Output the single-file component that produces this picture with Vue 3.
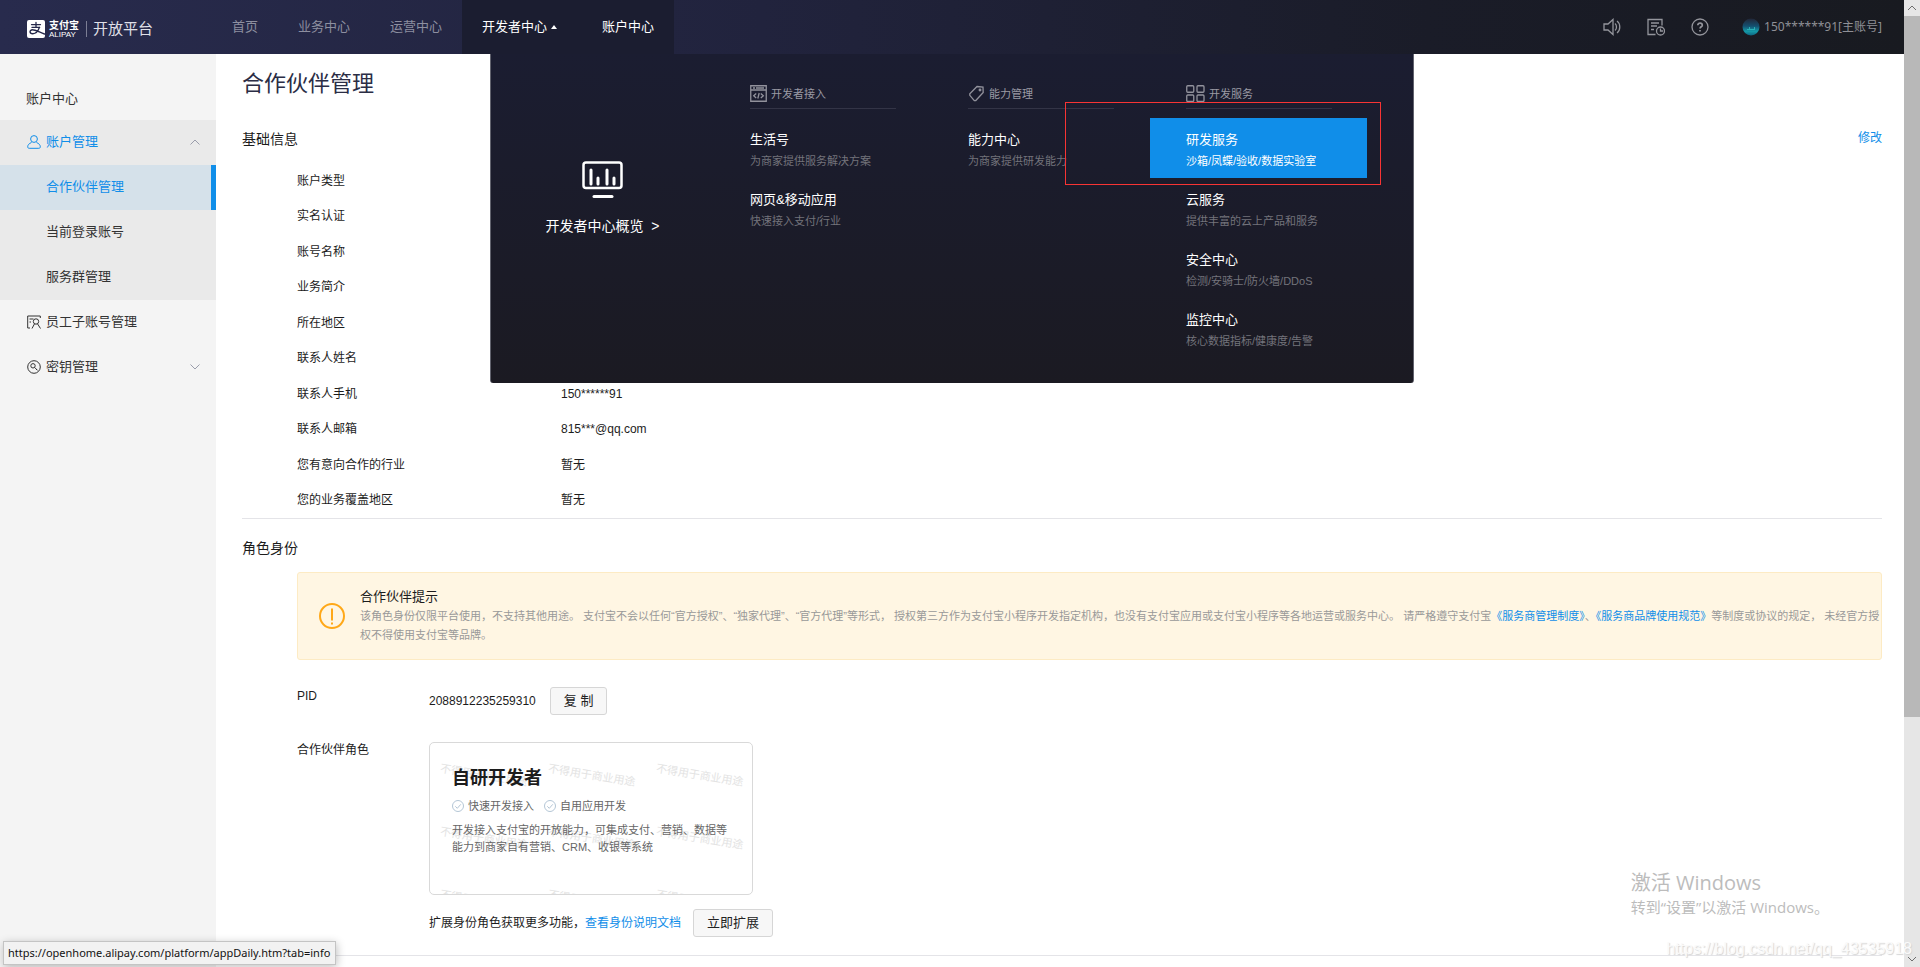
<script setup>
const mainNav = ['首页', '业务中心', '运营中心']

const sideItems = ['当前登录账号', '服务群管理']

const menuColumns = [
  {
    icon: 'code',
    title: '开发者接入',
    items: [
      { name: '生活号', desc: '为商家提供服务解决方案' },
      { name: '网页&移动应用', desc: '快速接入支付/行业' },
    ],
  },
  {
    icon: 'tag',
    title: '能力管理',
    items: [{ name: '能力中心', desc: '为商家提供研发能力' }],
  },
  {
    icon: 'grid',
    title: '开发服务',
    items: [
      { name: '研发服务', desc: '沙箱/凤蝶/验收/数据实验室', active: true },
      { name: '云服务', desc: '提供丰富的云上产品和服务' },
      { name: '安全中心', desc: '检测/安骑士/防火墙/DDoS' },
      { name: '监控中心', desc: '核心数据指标/健康度/告警' },
    ],
  },
]

const info = [
  ['账户类型', ''],
  ['实名认证', ''],
  ['账号名称', ''],
  ['业务简介', ''],
  ['所在地区', ''],
  ['联系人姓名', ''],
  ['联系人手机', '150******91'],
  ['联系人邮箱', '815***@qq.com'],
  ['您有意向合作的行业', '暂无'],
  ['您的业务覆盖地区', '暂无'],
]
</script>

<template>
  <div class="window">
    <div class="page">
      <header class="topbar">
        <a class="logo" href="#">
          <svg class="logo-mark" viewBox="0 0 18 18" aria-hidden="true">
            <rect width="18" height="18" rx="2" fill="#fff" />
            <g fill="none" stroke="#25284a" stroke-linecap="round">
              <path d="M4.5 4.6h9M9 2.4v4.8M5 7.4h7.6" stroke-width="1.3" />
              <path d="M12.4 7.4c-1.2 3.6-3.8 6.3-6.6 6.3-3.6 0-3.6-3.9-.3-3.9 2.8 0 6.5 2.200 12 4.200" stroke-width="1.4" />
            </g>
          </svg>
          <span class="logo-name"><b>支付宝</b><i>ALIPAY</i></span>
          <span class="logo-sub">开放平台</span>
        </a>
        <nav class="nav">
          <a v-for="n in mainNav" :key="n" href="#">{{ n }}</a>
          <a class="on dev" href="#">开发者中心<svg viewBox="0 0 6 4" width="6" height="4"><path d="M0 4 3 0l3 4z" fill="#fff" /></svg></a>
          <a class="on" href="#">账户中心</a>
        </nav>
        <div class="tools">
          <button type="button" aria-label="公告">
            <svg viewBox="0 0 18 18"><path d="M1 6h4l5-4.500v15L5 12H1zM12 5.500c2 1.500 2 5.500 0 7M14 3c3.700 2.500 3.700 9.500 0 12" /></svg>
          </button>
          <button type="button" aria-label="工单">
            <svg viewBox="0 0 18 18"><path d="M8.500 16.500H1V1.500h14v6M4 5h8M4 8h6M4 11.500h3" /><circle cx="13.500" cy="13" r="4" /><path d="M13.500 10.500V13H16" /></svg>
          </button>
          <button type="button" aria-label="帮助">
            <svg viewBox="0 0 18 18"><circle cx="9" cy="9" r="8" /><path d="M6.800 7.200c0-2.800 4.500-2.800 4.500 0 0 1.600-2.200 1.500-2.200 3.200M9 12v1.500" stroke-width="1.700" /></svg>
          </button>
          <a class="user" href="#">
            <svg viewBox="0 0 18 18" aria-hidden="true">
              <defs>
                <linearGradient id="sea" x1="0" y1="0" x2="0" y2="1">
                  <stop offset="0" stop-color="#222536" /><stop offset=".45" stop-color="#145070" /><stop offset=".75" stop-color="#149aa8" /><stop offset="1" stop-color="#0f6480" />
                </linearGradient>
              </defs>
              <circle cx="9" cy="9" r="8.500" fill="url(#sea)" />
              <path d="M5 11h2V9h1v2h4V9h1v3h-8z" fill="#33c6c6" opacity=".7" />
            </svg>
            150******91[主账号]
          </a>
        </div>

        <section class="mega">
          <a class="overview" href="#">
            <svg viewBox="0 0 41 38" width="41" height="38" fill="none" stroke="#fff" stroke-linecap="round">
              <rect x="1.500" y="1.500" width="38" height="25.500" rx="2.500" stroke-width="2.500" />
              <path d="M9 9v14M16 17v6M25 9v14M32 17v6" stroke-width="3" />
              <path d="M12 35.500h18" stroke-width="3" />
            </svg>
            <span>开发者中心概览&nbsp; &gt;</span>
          </a>
          <div v-for="c in menuColumns" :key="c.title" class="mega-col">
            <h3>
              <svg v-if="c.icon === 'code'" viewBox="0 0 17 17" width="17" height="17"><path d="M.75.75h15.500v15.500H.75zM1 5h15M3 3h2M6 3h8M6.200 8.500l-2.500 2.300 2.500 2.300M10.800 8.500l2.500 2.300-2.500 2.300M9.200 8l-1.400 5.500" /></svg>
              <svg v-else-if="c.icon === 'tag'" viewBox="0 0 17 17" width="17" height="17"><path d="M9 1.500 15 2l.2 5.500-7.400 8-1.500.1-4.500-5.300v-1.500z" /><circle cx="12" cy="5" r=".8" /></svg>
              <svg v-else viewBox="0 0 19 17" width="19" height="17"><rect x=".75" y=".75" width="7" height="6.500" rx="1" /><rect x="11" y=".75" width="7" height="6.500" rx="1" /><rect x=".75" y="10" width="7" height="6.500" rx="1" /><rect x="11" y="10" width="7" height="6.500" rx="1" /></svg>
              {{ c.title }}
            </h3>
            <a v-for="i in c.items" :key="i.name" href="#" :class="{ active: i.active }">
              <strong>{{ i.name }}</strong>
              <span>{{ i.desc }}</span>
            </a>
          </div>
          <div class="marker"></div>
        </section>
      </header>

      <div class="body">
        <aside class="side">
          <h2>账户中心</h2>
          <div class="group">
            <a class="blue" href="#">
              <svg class="ico" viewBox="0 0 14 14"><circle cx="7" cy="4" r="3.400" /><path d="M4.500 7.500C2 8.500.7 10 .7 11.800c0 1 .6 1.500 1.500 1.500h9.600c.9 0 1.500-.5 1.500-1.500 0-1.800-1.300-3.300-3.800-4.300" /></svg>
              账户管理
              <svg class="arrow" viewBox="0 0 10 6"><path d="M.5 5.500 5 1l4.500 4.500" /></svg>
            </a>
            <a class="sub current" href="#">合作伙伴管理</a>
            <a v-for="s in sideItems" :key="s" class="sub" href="#">{{ s }}</a>
          </div>
          <a href="#">
            <svg class="ico" viewBox="0 0 14 14"><path d="M3 13H.7V1h12.600v2M2.500 4h4M2.500 7H4" /><circle cx="9" cy="6.500" r="2.700" /><path d="M7.500 8.800 5 13.500M10.500 8.800l3 4.700" /></svg>
            员工子账号管理
          </a>
          <a href="#">
            <svg class="ico" viewBox="0 0 14 14"><circle cx="7" cy="7" r="6.300" /><circle cx="6" cy="5.800" r="2.200" /><path d="m7.600 7.400 3 3M9 10l1-1" /></svg>
            密钥管理
            <svg class="arrow" viewBox="0 0 10 6"><path d="M.5.500 5 5 9.500.500" /></svg>
          </a>
        </aside>

        <main class="main">
          <h1>合作伙伴管理</h1>
          <section class="basic">
            <div class="head">
              <h2>基础信息</h2>
              <a href="#">修改</a>
            </div>
            <dl>
              <div v-for="r in info" :key="r[0]"><dt>{{ r[0] }}</dt><dd>{{ r[1] }}</dd></div>
            </dl>
          </section>

          <section class="role">
            <h2>角色身份</h2>
            <div class="indent">
              <div class="notice">
                <svg viewBox="0 0 26 26" width="26" height="26"><circle cx="13" cy="13" r="12" fill="none" stroke="#ffa818" stroke-width="2" /><path d="M13 5.500v12M13 19.500v2" stroke="#ffa818" stroke-width="2" /></svg>
                <div>
                  <h4>合作伙伴提示</h4>
                  <p>该角色身份仅限平台使用，不支持其他用途。 支付宝不会以任何“官方授权”、“独家代理”、“官方代理”等形式， 授权第三方作为支付宝小程序开发指定机构，也没有支付宝应用或支付宝小程序等各地运营或服务中心。 请严格遵守支付宝<a href="#">《服务商管理制度》</a>、<a href="#">《服务商品牌使用规范》</a>等制度或协议的规定， 未经官方授权不得使用支付宝等品牌。</p>
                </div>
              </div>

              <div class="row">
                <span class="label">PID</span>
                <div class="line">
                  <span>2088912235259310</span>
                  <button class="btn" type="button">复 制</button>
                </div>
              </div>

              <div class="row second">
                <span class="label">合作伙伴角色</span>
                <div>
                  <article class="card">
                    <div class="stamps" aria-hidden="true"><span v-for="n in 9" :key="n">不得用于商业用途</span></div>
                    <h3>自研开发者</h3>
                    <ul>
                      <li v-for="t in ['快速开发接入', '自用应用开发']" :key="t">
                        <svg viewBox="0 0 12 12" width="12" height="12" fill="none" stroke="#b4c6d6"><circle cx="6" cy="6" r="5.500" /><path d="m3.300 6.300 2 2 3.500-4" /></svg>
                        {{ t }}
                      </li>
                    </ul>
                    <p>开发接入支付宝的开放能力，可集成支付、营销、数据等能力到商家自有营销、CRM、收银等系统</p>
                  </article>
                  <div class="line extend">
                    <span>扩展身份角色获取更多功能，<a href="#">查看身份说明文档</a></span>
                    <button class="btn" type="button">立即扩展</button>
                  </div>
                </div>
              </div>
            </div>
          </section>
        </main>
      </div>
    </div>

    <div class="scroll" aria-hidden="true">
      <svg viewBox="0 0 16 16"><path d="m4 10 4-4 4 4" /></svg>
      <div class="track"><div class="thumb"></div></div>
      <svg viewBox="0 0 16 16"><path d="m4 6 4 4 4-4" /></svg>
    </div>

    <div class="activate">
      <strong>激活 Windows</strong>
      <span>转到“设置”以激活 Windows。</span>
    </div>
    <div class="credit">https://blog.csdn.net/qq_43535918</div>
    <div class="status">https://openhome.alipay.com/platform/appDaily.htm?tab=info</div>
  </div>
</template>

<style>
body {
  margin: 0;
}
</style>

<style scoped>
.window {
  position: relative;
  display: flex;
  min-height: 100vh;
  overflow: hidden;
  background: #fff;
  color: #1c1c1c;
  font: 12px/18px "Liberation Sans", "Noto Sans CJK SC", sans-serif;
}
.window * {
  box-sizing: border-box;
}
h1, h2, h3, h4, p, dl, dd, ul {
  margin: 0;
  padding: 0;
  font-weight: 400;
}
a {
  color: #108ee9;
  text-decoration: none;
}
button {
  font: inherit;
  cursor: pointer;
}
.page {
  flex: 1;
  min-width: 0;
  display: flex;
  flex-direction: column;
}

/* top bar */
.topbar {
  position: relative;
  z-index: 2;
  display: flex;
  height: 54px;
  background: linear-gradient(90deg, #282b4d, #21233d 40%, #1a1c28 75%, #181a20);
  font-size: 13px;
}
.logo {
  width: 212px;
  display: flex;
  align-items: center;
  padding: 4px 0 0 27px;
  color: #fff;
}
.logo-mark {
  width: 18px;
  height: 18px;
}
.logo-name {
  display: flex;
  flex-direction: column;
  margin: 0 7px 0 4px;
}
.logo-name b {
  font-size: 10px;
  line-height: 11px;
}
.logo-name i {
  font-size: 8px;
  line-height: 7px;
  font-style: normal;
}
.logo-sub {
  border-left: 1px solid #7c7e94;
  padding-left: 6px;
  font-size: 15px;
  line-height: 16px;
  color: #e0e0e8;
}
.nav {
  display: flex;
}
.nav a {
  display: flex;
  align-items: center;
  padding: 0 20px;
  color: #8d8fa0;
}
.nav .on {
  color: #fff;
  background: #1b1d30;
}
.nav .dev {
  width: 120px;
  gap: 4px;
}
.tools {
  margin-left: auto;
  display: flex;
  align-items: center;
  gap: 26px;
  padding-right: 22px;
}
.tools button {
  display: flex;
  padding: 0;
  border: 0;
  background: none;
}
.tools svg {
  width: 18px;
  height: 18px;
  flex: none;
}
.tools button svg {
  fill: none;
  stroke: #94959c;
  stroke-width: 1.3;
}
.user {
  display: flex;
  align-items: center;
  gap: 4px;
  margin-left: 7px;
  color: #8f9096;
  font-family: "Noto Sans", "Noto Sans CJK SC", sans-serif;
  font-size: 12px;
}

/* drop-down panel */
.mega {
  position: absolute;
  top: 54px;
  left: 0;
  right: 0;
  width: 924px;
  min-height: 329px;
  margin: 0 auto;
  display: flex;
  border-left: 1px solid #62636e;
  border-right: 1px solid #62636e;
  border-radius: 0 0 3px 3px;
  background: linear-gradient(#1b1d31, #1b1a22);
}
.overview {
  width: 223px;
  display: flex;
  flex-direction: column;
  align-items: center;
  padding-top: 107px;
  gap: 17px;
  font-size: 14px;
  line-height: 20px;
  color: #fff;
}
.mega-col {
  width: 218px;
  padding-top: 29px;
}
.mega-col h3 {
  display: flex;
  align-items: center;
  gap: 4px;
  height: 26px;
  margin: 0 36px 9px;
  padding-bottom: 4px;
  border-bottom: 1px solid #333446;
  color: #9a9aa4;
  font-size: 11px;
}
.mega-col h3 svg {
  fill: none;
  stroke: #92929c;
  stroke-width: 1.3;
}
.mega-col a {
  display: flex;
  flex-direction: column;
  gap: 1px;
  min-height: 60px;
  padding: 12px 0 4px 36px;
  margin-right: 1px;
  color: #73737b;
  font-size: 11px;
  line-height: 20px;
  white-space: nowrap;
}
.mega-col strong {
  font-size: 13px;
  font-weight: 400;
  color: #fff;
}
.mega-col .active {
  background: #108ee9;
  color: #fff;
}
.marker {
  position: absolute;
  top: 48px;
  left: 574px;
  width: 316px;
  height: 83px;
  border: 1px solid #f83434;
  pointer-events: none;
}

/* side menu */
.body {
  flex: 1;
  display: flex;
}
.side {
  width: 216px;
  flex: none;
  background: #f4f4f4;
  font-size: 13px;
}
.side h2 {
  height: 66px;
  padding: 24px 0 0 26px;
  font-size: 13px;
  line-height: 42px;
  color: #333;
}
.side a {
  display: flex;
  align-items: center;
  height: 45px;
  padding: 0 16px 2px 27px;
  color: #333;
}
.side .group {
  background: #eaeaea;
}
.side .blue,
.side .current {
  color: #108ee9;
}
.side .sub {
  padding-left: 46px;
}
.side .current {
  background: #d5e1ea;
  border-right: 5px solid #108ee9;
}
.side svg {
  fill: none;
  stroke: currentColor;
}
.ico {
  width: 14px;
  height: 14px;
  margin-right: 5px;
}
.side .arrow {
  width: 10px;
  height: 6px;
  margin-left: auto;
  stroke: #9a9dab;
}

/* content */
.main {
  flex: 1;
  min-width: 0;
  padding: 15px 22px 0 26px;
}
h1 {
  font-size: 22px;
  line-height: 30px;
  color: #2b2d45;
}
.main h2 {
  font-size: 14px;
  line-height: 20px;
}
.basic {
  margin-top: 30px;
  border-bottom: 1px solid #e4e4e8;
}
.head {
  display: flex;
  justify-content: space-between;
}
dl {
  display: grid;
  grid-auto-rows: 1fr;
  min-height: 355px;
  margin-top: 14px;
  padding-left: 55px;
}
dl div {
  display: flex;
  align-items: center;
}
dt {
  width: 264px;
}
.role {
  padding: 19px 0 18px;
  border-bottom: 1px solid #e4e4e8;
}
.indent {
  padding-left: 55px;
}
.notice {
  display: flex;
  align-items: center;
  gap: 15px;
  margin-top: 14px;
  padding: 14px 0 14px 21px;
  border: 1px solid #fdebc4;
  border-radius: 3px;
  background: #fff6e3;
}
.notice svg {
  flex: none;
}
.notice h4 {
  font-size: 13px;
  line-height: 20px;
}
.notice p {
  font-size: 11px;
  line-height: 19px;
  color: #999;
}
.row {
  display: flex;
  margin-top: 27px;
}
.row.second {
  margin-top: 26px;
}
.label {
  width: 132px;
  flex: none;
}
.line {
  display: flex;
  align-items: center;
  gap: 14px;
}
.btn {
  height: 28px;
  padding: 0 13px;
  border: 1px solid #d6d6d6;
  border-radius: 3px;
  background: #f7f7f7;
  color: #222;
  font-size: 13px;
}
.card {
  position: relative;
  width: 324px;
  min-height: 153px;
  margin-top: 1px;
  padding: 23px 22px;
  border: 1px solid #d9d9d9;
  border-radius: 5px;
  overflow: hidden;
}
.stamps {
  position: absolute;
  inset: 23px 0 auto 10px;
  display: grid;
  grid-template-columns: repeat(3, 108px);
  grid-auto-rows: 63px;
  font-size: 11px;
  color: #e3e3e3;
}
.stamps span {
  transform: rotate(9deg);
  transform-origin: 44px 8px;
}
.card h3,
.card ul,
.card p {
  position: relative;
}
.card h3 {
  font-size: 18px;
  line-height: 24px;
  font-weight: 700;
}
.card ul {
  display: flex;
  gap: 10px;
  margin-top: 7px;
  list-style: none;
  font-size: 11px;
  color: #666;
}
.card li {
  display: flex;
  align-items: center;
  gap: 4px;
}
.card p {
  margin-top: 7px;
  font-size: 11px;
  line-height: 17px;
  color: #666;
}
.extend {
  gap: 12px;
  margin-top: 14px;
}

/* browser scroll bar */
.scroll {
  width: 16px;
  flex: none;
  display: flex;
  flex-direction: column;
  background: #e6e6e6;
}
.scroll svg {
  width: 16px;
  height: 16px;
  fill: none;
  stroke: #6e6e6e;
}
.track {
  flex: 1;
}
.thumb {
  height: 75vh;
  max-height: 75%;
  background: #b8b8b8;
}

/* overlays */
.activate {
  position: absolute;
  right: 91px;
  bottom: 49px;
  display: flex;
  flex-direction: column;
  font-family: "Open Sans", "Noto Sans CJK SC", sans-serif;
  color: #bcbcbc;
}
.activate strong {
  font-size: 20px;
  line-height: 26px;
  font-weight: 400;
}
.activate span {
  font-size: 15px;
  line-height: 22px;
}
.credit {
  position: absolute;
  right: 8px;
  bottom: 8px;
  z-index: 3;
  font-size: 16px;
  line-height: 20px;
  color: #fafafa;
  text-shadow: 1px 1px 1px #d4d4d4;
}
.status {
  position: absolute;
  left: 3px;
  bottom: 2px;
  z-index: 3;
  padding: 0 5px 0 4px;
  border: 1px solid #c4c4c4;
  background: #f2f2f2;
  box-shadow: 1px 2px 8px rgba(0, 0, 0, 0.25);
  color: #111;
  font: 11px/22px "Noto Sans", sans-serif;
}
</style>
